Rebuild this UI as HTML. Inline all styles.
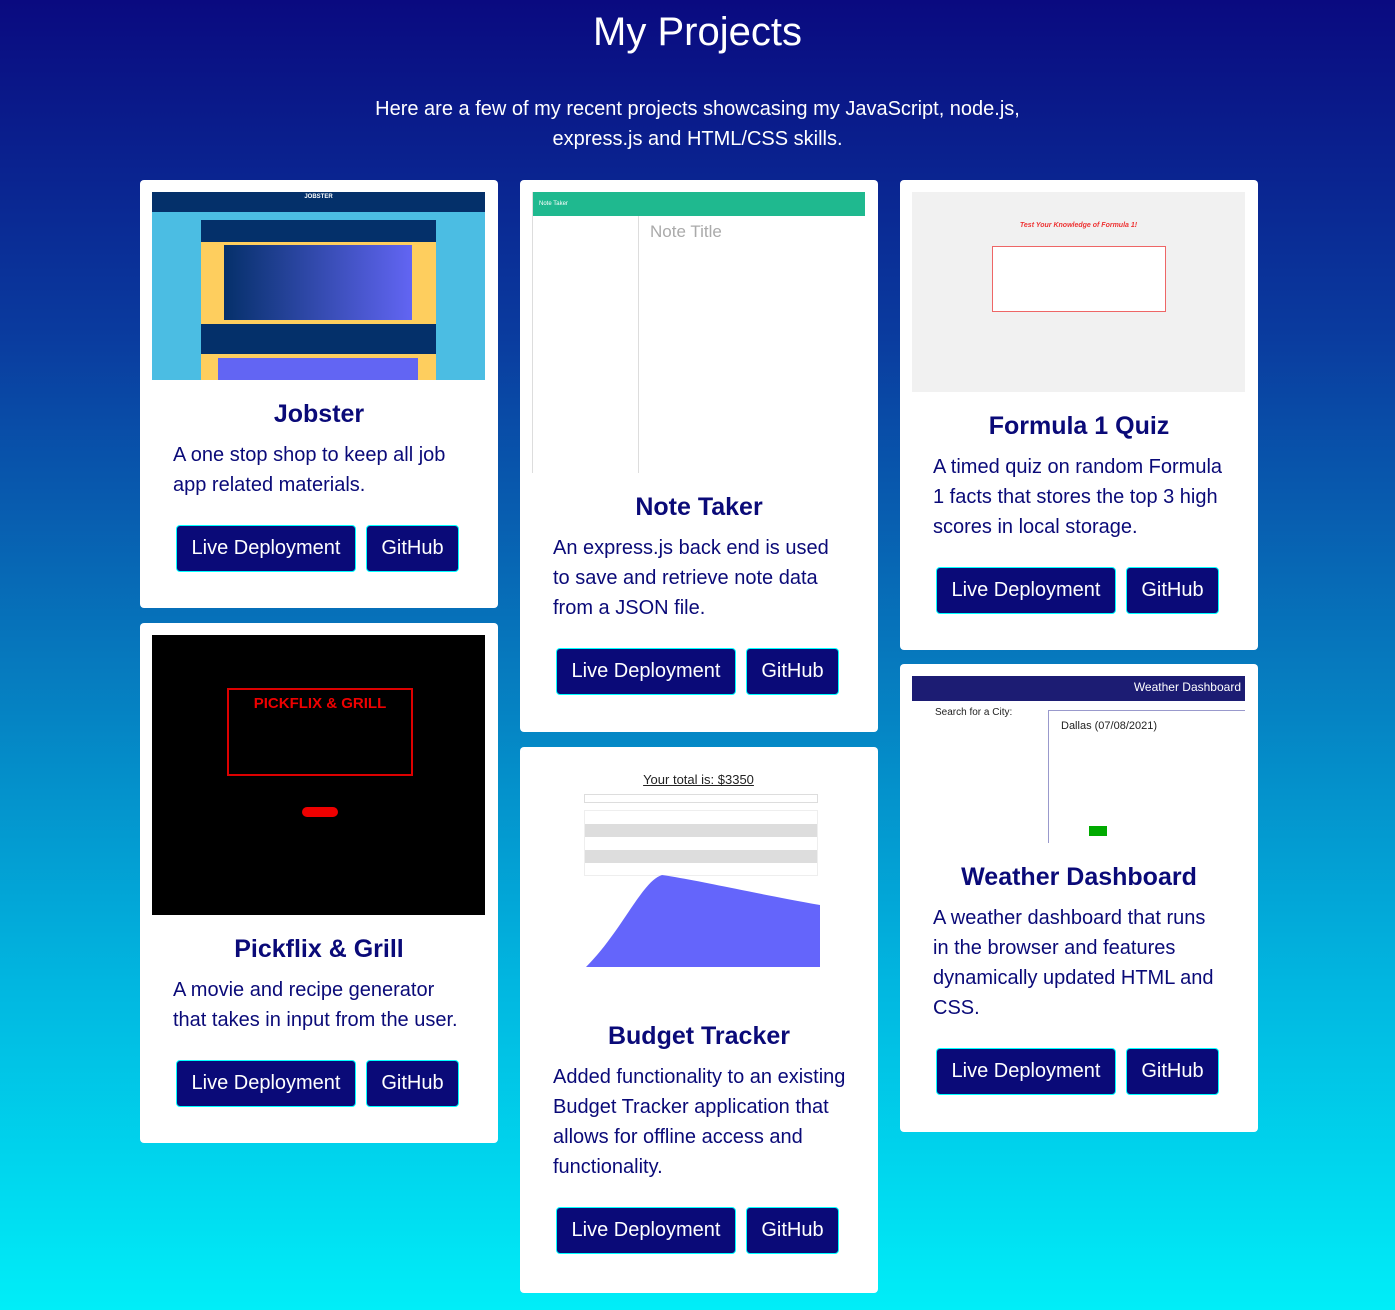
<!DOCTYPE html>
<html><head><meta charset="utf-8"><style>
*{box-sizing:border-box;margin:0;padding:0}
body{width:1395px;height:1310px;overflow:hidden;font-family:"Liberation Sans",Arial,sans-serif;background:linear-gradient(180deg,#0a0a80 0%,#0a3a9e 25%,#0678bd 50%,#01b6e0 75%,#00eef8 100%);position:relative;color:#0a0a78}
h1{position:absolute;top:10px;width:100%;text-align:center;color:#fff;font-weight:normal;font-size:40px}
.intro{position:absolute;top:94px;left:0;width:100%;text-align:center;color:#fff;font-size:20px;line-height:30px}
.card{position:absolute;width:358px;background:#fff;border-radius:4px;padding:12px 12px 0}
.img{width:333px;position:relative;overflow:hidden}
.t{text-align:center;font-weight:bold;font-size:25px;line-height:32px;margin-top:18px;color:#0a0a78}
.d{font-size:20px;line-height:30px;margin-left:21px;width:292px;margin-top:10px;color:#0a0a78}
.btns{margin-top:25px;padding-left:24px;display:flex;gap:10px}
.b{height:47px;background:#0a0a78;color:#fff;border:1px solid #0ff;border-radius:4px;font-size:20px;line-height:45px;text-align:center}
.b1{width:180px}.b2{width:93px}
.s{position:absolute;font-size:6px;color:#fff;text-align:center}
</style></head><body>
<h1>My Projects</h1>
<div class="intro">Here are a few of my recent projects showcasing my JavaScript, node.js,<br>express.js and HTML/CSS skills.</div>

<div class="card" style="left:140px;top:180px;height:428px">
<div class="img" style="height:188px;background:#4bbde3">
<div style="position:absolute;left:0;top:0;width:333px;height:20px;background:#04306a"></div>
<div class="s" style="left:0;width:333px;top:2px;font-weight:bold">JOBSTER</div>
<div style="position:absolute;left:49px;top:28px;width:235px;height:160px;background:#fece5e"></div>
<div style="position:absolute;left:49px;top:28px;width:235px;height:22px;background:#04306a"></div>
<div style="position:absolute;left:72px;top:53px;width:188px;height:75px;background:linear-gradient(90deg,#05306a,#6265f3)"></div>
<div style="position:absolute;left:49px;top:132px;width:235px;height:30px;background:#04306a"></div>
<div style="position:absolute;left:66px;top:166px;width:200px;height:22px;background:#6265f3"></div>
</div>
<div class="t">Jobster</div>
<div class="d">A one stop shop to keep all job app related materials.</div>
<div class="btns"><div class="b b1">Live Deployment</div><div class="b b2">GitHub</div></div>
</div>

<div class="card" style="left:140px;top:623px;height:520px">
<div class="img" style="height:280px;background:#000">
<div style="position:absolute;left:75px;top:53px;width:186px;height:88px;border:2px solid #d00"></div>
<div style="position:absolute;left:75px;top:60px;width:186px;text-align:center;color:#e00;font-weight:bold;font-size:15px">PICKFLIX &amp; GRILL</div>
<div style="position:absolute;left:150px;top:172px;width:36px;height:10px;background:#e00;border-radius:5px"></div>
</div>
<div class="t">Pickflix &amp; Grill</div>
<div class="d">A movie and recipe generator that takes in input from the user.</div>
<div class="btns"><div class="b b1">Live Deployment</div><div class="b b2">GitHub</div></div>
</div>

<div class="card" style="left:520px;top:180px;height:552px">
<div class="img" style="height:281px;background:#fff;border-left:1px solid #ddd">
<div style="position:absolute;left:0;top:0;width:333px;height:24px;background:#1fb98f;color:#fff;font-size:6px;line-height:24px;padding-left:6px">Note Taker</div>
<div style="position:absolute;left:105px;top:24px;width:1px;height:257px;background:#ddd"></div>
<div style="position:absolute;left:117px;top:30px;font-size:17px;color:#aaa">Note Title</div>
</div>
<div class="t">Note Taker</div>
<div class="d">An express.js back end is used to save and retrieve note data from a JSON file.</div>
<div class="btns"><div class="b b1">Live Deployment</div><div class="b b2">GitHub</div></div>
</div>

<div class="card" style="left:520px;top:747px;height:546px">
<div class="img" style="height:243px;background:#fff">
<div style="position:absolute;left:0;width:333px;top:13px;text-align:center;font-size:13px;color:#222;text-decoration:underline">Your total is: $3350</div>
<div style="position:absolute;left:52px;top:35px;width:234px;height:9px;border:1px solid #ddd"></div>
<div style="position:absolute;left:52px;top:51px;width:234px;height:66px;border:1px solid #eee;background:repeating-linear-gradient(180deg,#fff 0 13px,#ddd 13px 26px)"></div>
<svg style="position:absolute;left:50px;top:112px" width="250" height="115"><path d="M4 96 C40 60 60 10 80 4 C120 10 160 20 238 34 L238 96 L4 96Z" fill="#6465fb"/></svg>
</div>
<div class="t">Budget Tracker</div>
<div class="d" style="width:297px">Added functionality to an existing Budget Tracker application that allows for offline access and functionality.</div>
<div class="btns"><div class="b b1">Live Deployment</div><div class="b b2">GitHub</div></div>
</div>

<div class="card" style="left:900px;top:180px;height:470px">
<div class="img" style="height:200px;background:#f1f1f1">
<div style="position:absolute;left:0;width:333px;top:30px;text-align:center;color:#e33;font-size:7px;font-weight:bold;font-style:italic">Test Your Knowledge of Formula 1!</div>
<div style="position:absolute;left:80px;top:54px;width:174px;height:66px;border:1px solid #e66;background:#fff"></div>
</div>
<div class="t">Formula 1 Quiz</div>
<div class="d">A timed quiz on random Formula 1 facts that stores the top 3 high scores in local storage.</div>
<div class="btns"><div class="b b1">Live Deployment</div><div class="b b2">GitHub</div></div>
</div>

<div class="card" style="left:900px;top:664px;height:468px">
<div class="img" style="height:167px;background:#fff">
<div style="position:absolute;left:0;top:0;width:333px;height:25px;background:#1c1c73;color:#fff;font-size:12px;line-height:22px;text-align:right;padding-right:4px">Weather Dashboard</div>
<div style="position:absolute;left:23px;top:31px;font-size:10px;color:#222">Search for a City:</div>
<div style="position:absolute;left:136px;top:34px;width:197px;height:133px;border-left:1px solid #99c;border-top:1px solid #99c"></div>
<div style="position:absolute;left:149px;top:44px;font-size:11px;color:#222">Dallas (07/08/2021)</div>
<div style="position:absolute;left:177px;top:150px;width:18px;height:10px;background:#0a0"></div>
</div>
<div class="t">Weather Dashboard</div>
<div class="d">A weather dashboard that runs in the browser and features dynamically updated HTML and CSS.</div>
<div class="btns"><div class="b b1">Live Deployment</div><div class="b b2">GitHub</div></div>
</div>
</body></html>
